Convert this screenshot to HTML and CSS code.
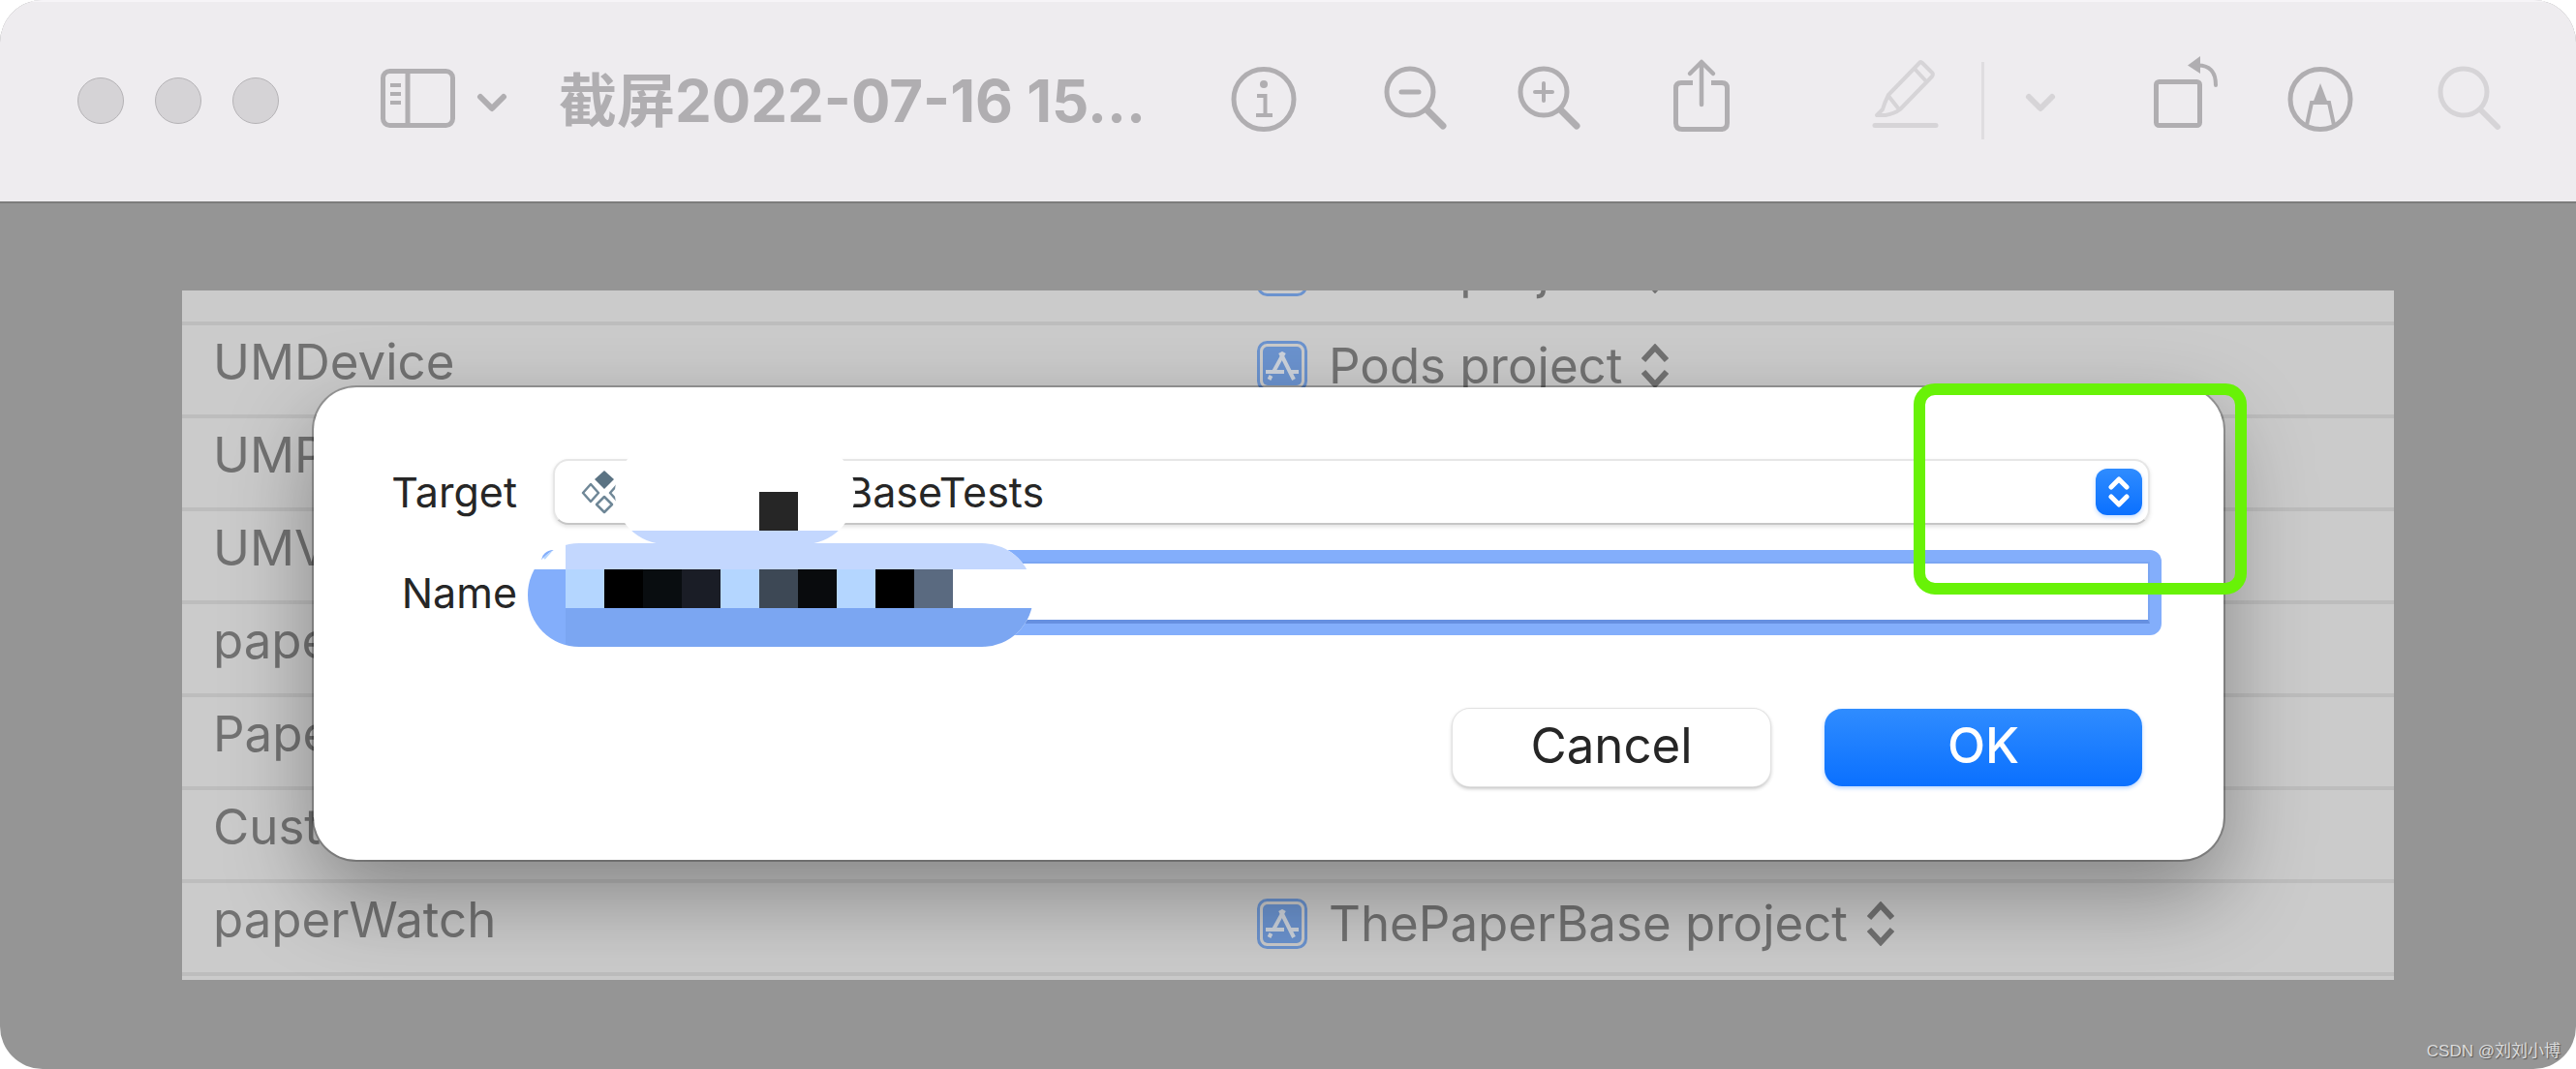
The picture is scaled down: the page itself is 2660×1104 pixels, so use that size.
FILE: index.html
```html
<!DOCTYPE html>
<html lang="zh-CN">
<head>
    <meta charset="UTF-8">
    <meta name="viewport" content="width=device-width, initial-scale=1.0">
    <title>截屏2022-07-16 15...</title>
    <link rel="stylesheet" href="styles.css">
</head>
<body>

    <!-- shared icons -->
    <svg class="sprite" aria-hidden="true">
        <symbol id="app-icon" viewBox="0 0 52 52">
            <rect x="1.5" y="1.5" width="49" height="49" rx="9" fill="none" stroke="currentColor" stroke-width="3"/>
            <rect x="6" y="6" width="40" height="40" rx="5" fill="currentColor"/>
            <g fill="none" stroke="#cdd3dc" stroke-width="4">
                <path d="M28 12 L17 32 M14.500 36 L12.500 40"/>
                <path d="M24 12 L38 40"/>
                <path d="M9 32 H28 M35 32 H43"/>
            </g>
        </symbol>
        <symbol id="updown" viewBox="0 0 28 46">
            <path d="M2 17 L14 4 L26 17 M2 29 L14 42 L26 29" fill="none" stroke="currentColor" stroke-width="6"/>
        </symbol>
        <symbol id="chevron" viewBox="0 0 40 40">
            <path d="M8 16 L20 28 L32 16" fill="none" stroke="currentColor" stroke-width="6" stroke-linecap="round" stroke-linejoin="round"/>
        </symbol>
    </svg>

    <div class="window">
        <header class="toolbar">
            <div class="lights">
                <button class="light" aria-label="Close"></button>
                <button class="light" aria-label="Minimize"></button>
                <button class="light" aria-label="Zoom window"></button>
            </div>

            <button class="tool sidebar" aria-label="Sidebar">
                <svg class="icon" viewBox="0 0 80 80">
                    <rect x="3.500" y="9.500" width="72" height="56" rx="7" stroke-width="5"/>
                    <path d="M29 10 V66" stroke-width="5"/>
                    <path d="M11 24 H22 M11 33 H22 M11 42 H22" stroke-width="4"/>
                </svg>
                <svg class="chevron"><use href="#chevron"/></svg>
            </button>

            <h1 class="title">截屏2022-07-16 15...</h1>

            <div class="tools">
                <button class="tool" aria-label="Info">
                    <svg class="icon" viewBox="0 0 80 80">
                        <circle cx="40" cy="38.500" r="31" stroke-width="5"/>
                        <circle cx="40" cy="23" r="4" class="solid"/>
                        <path d="M33 35 H41.500 V54 M32 55 H49" stroke-width="4"/>
                    </svg>
                </button>
                <div class="zoom">
                    <button class="tool" aria-label="Zoom out">
                        <svg class="icon" viewBox="0 0 80 80">
                            <circle cx="34" cy="31" r="24" stroke-width="5"/>
                            <path d="M25 31 H43" stroke-width="5" stroke-linecap="round"/>
                            <path d="M52 50 L68 66" stroke-width="7" stroke-linecap="round"/>
                        </svg>
                    </button>
                    <button class="tool" aria-label="Zoom in">
                        <svg class="icon" viewBox="0 0 80 80">
                            <circle cx="34" cy="31" r="24" stroke-width="5"/>
                            <path d="M25 31 H43 M34 22 V40" stroke-width="4" stroke-linecap="round"/>
                            <path d="M52 50 L68 66" stroke-width="7" stroke-linecap="round"/>
                        </svg>
                    </button>
                </div>
                <button class="tool" aria-label="Share">
                    <svg class="icon" viewBox="0 0 80 80">
                        <path d="M31 21.500 H19 Q13.500 21.500 13.500 27 V63 Q13.500 69.500 20 69.500 H60 Q66.500 69.500 66.500 63 V27 Q66.500 21.500 61 21.500 H50" stroke-width="5"/>
                        <path d="M40 44 V2 M28 12 L40 0 L52 12" stroke-width="4.500" stroke-linecap="round" stroke-linejoin="round"/>
                    </svg>
                </button>
            </div>

            <div class="tools edit faded">
                <button class="tool" aria-label="Highlight" disabled>
                    <svg class="icon" viewBox="0 0 80 80">
                        <path d="M8 65.500 H71" stroke-width="5" stroke-linecap="round"/>
                        <path d="M54 1 L22 34 Q18 42 16 49 L10 55 H19 Q29 53 34 49 L67 15 Q69 12 66 10 L57 1 Q55 -1 54 1 Z M49 7 L61 20 M22 35 L33 49" stroke-width="4" stroke-linejoin="round"/>
                    </svg>
                </button>
                <span class="separator"></span>
                <button class="tool" aria-label="Highlight options" disabled>
                    <svg class="chevron"><use href="#chevron"/></svg>
                </button>
            </div>

            <div class="tools end">
                <button class="tool" aria-label="Rotate">
                    <svg class="icon" viewBox="0 0 80 80">
                        <rect x="9.500" y="20.500" width="45" height="45" rx="3" stroke-width="5"/>
                        <path d="M52 3.500 Q71 3 71 24" stroke-width="4" stroke-linecap="round"/>
                        <path class="solid" d="M42 3.500 L55 -6 V12 Z"/>
                    </svg>
                </button>
                <button class="tool" aria-label="Markup">
                    <svg class="icon" viewBox="0 0 80 80">
                        <circle cx="40" cy="38.500" r="31" stroke-width="5"/>
                        <path d="M26 65 L31 42 H49 L54 65" stroke-width="4"/>
                        <path class="solid" d="M40 22 L48 43 H32 Z"/>
                    </svg>
                </button>
                <button class="tool search faded" aria-label="Search" disabled>
                    <svg class="icon" viewBox="0 0 80 80">
                        <circle cx="34" cy="31" r="24" stroke-width="5"/>
                        <path d="M52 50 L69 67" stroke-width="6" stroke-linecap="round"/>
                    </svg>
                </button>
            </div>
        </header>

        <main class="content">
            <div class="sheet">
                <table class="targets">
                    <tr>
                        <td></td>
                        <td><button class="project"><svg class="app"><use href="#app-icon"/></svg>Pods project<svg class="updown"><use href="#updown"/></svg></button></td>
                    </tr>
                    <tr>
                        <td>UMDevice</td>
                        <td><button class="project"><svg class="app"><use href="#app-icon"/></svg>Pods project<svg class="updown"><use href="#updown"/></svg></button></td>
                    </tr>
                    <tr><td>UMP</td><td></td></tr>
                    <tr><td>UMV</td><td></td></tr>
                    <tr><td>pape</td><td></td></tr>
                    <tr><td>Pape</td><td></td></tr>
                    <tr><td>Cust</td><td></td></tr>
                    <tr>
                        <td>paperWatch</td>
                        <td><button class="project"><svg class="app"><use href="#app-icon"/></svg>ThePaperBase project<svg class="updown"><use href="#updown"/></svg></button></td>
                    </tr>
                </table>

                <form class="dialog">
                    <div class="row">
                        <label for="target">Target</label>
                        <div class="popup">
                            <select id="target">
                                <option>BaseTests</option>
                            </select>
                            <svg class="kit" viewBox="0 0 40 46">
                                <path d="M24 1 L34 10 L24 20 L14 10 Z" fill="#5b7383"/>
                                <g fill="none" stroke="#6f8797" stroke-width="2.500" stroke-linejoin="round">
                                    <path d="M10 15 L18 24 L10 33 L2 24 Z"/>
                                    <path d="M24 28 L32 36 L24 44 L16 36 Z"/>
                                    <path d="M38 15 L30 24 L38 33"/>
                                </g>
                            </svg>
                            <span class="stepper">
                                <svg viewBox="0 0 48 48"><path d="M16 19 L24 11 L32 19 M16 29 L24 37 L32 29"/></svg>
                            </span>
                        </div>
                    </div>
                    <div class="row">
                        <label for="name">Name</label>
                        <input type="text" id="name" class="name">
                    </div>
                    <div class="actions">
                        <button type="button" class="button">Cancel</button>
                        <button type="button" class="button primary">OK</button>
                    </div>

                    <!-- blurred out project name, 40px mosaic cells -->
                    <svg class="mosaic" viewBox="0 0 540 210" aria-hidden="true">
                        <clipPath id="upper"><rect x="95" y="-4" width="248" height="106" rx="53"/></clipPath>
                        <clipPath id="lower"><rect x="5" y="101" width="522" height="107" rx="53"/></clipPath>
                        <g clip-path="url(#upper)">
                            <rect x="95" y="-4" width="248" height="106" fill="#fff"/>
                            <rect x="95" y="88" width="248" height="18" fill="#c3d7fe"/>
                            <rect x="244" y="48" width="40" height="40" fill="#262626"/>
                        </g>
                        <g clip-path="url(#lower)">
                            <rect x="0" y="101" width="540" height="107" fill="#fff"/>
                            <path d="M22 117 L30 108" stroke="#b4d6ff" stroke-width="2"/>
                            <rect x="44" y="101" width="496" height="27" fill="#c3d7fe"/>
                            <rect x="0" y="128" width="44" height="80" fill="#83aefb"/>
                            <rect x="44" y="128" width="360" height="40" fill="#b4d6ff"/>
                            <rect x="84" y="128" width="40" height="40" fill="#000"/>
                            <rect x="124" y="128" width="40" height="40" fill="#090d10"/>
                            <rect x="164" y="128" width="40" height="40" fill="#1a1d26"/>
                            <rect x="244" y="128" width="40" height="40" fill="#3d4855"/>
                            <rect x="284" y="128" width="40" height="40" fill="#090b0d"/>
                            <rect x="364" y="128" width="40" height="40" fill="#000"/>
                            <rect x="404" y="128" width="40" height="40" fill="#5a6a80"/>
                            <rect x="44" y="168" width="496" height="40" fill="#7ba6f2"/>
                        </g>
                    </svg>
                    <div class="highlight"></div>
                </form>
            </div>

            <div class="watermark">CSDN @刘刘小博</div>
        </main>
    </div>

</body>
</html>
```

FILE: styles.css
```css
* {
    margin: 0;
    padding: 0;
    box-sizing: border-box;
}
body {
    font-family: Inter, 'Noto Sans CJK SC', sans-serif;
    background-color: #fff;
}
button {
    font-family: inherit;
    background: none;
    border: none;
}
.sprite {
    position: absolute;
    width: 0;
    height: 0;
}
.window {
    display: flex;
    flex-direction: column;
    min-height: 100vh;
    border-radius: 44px;
    overflow: hidden;
    background-color: #959595;
}

/* toolbar */
.toolbar {
    display: flex;
    align-items: center;
    height: 210px;
    padding: 0 70px 2px 80px;
    background-color: #eeecef;
    border-top: 2px solid #f6f4f7;
    border-bottom: 2px solid #7c7c7c;
    color: #b0aeb1;
}
.lights {
    display: flex;
    gap: 32px;
}
.light {
    width: 48px;
    height: 48px;
    border-radius: 50%;
    background-color: #d5d3d6;
    border: 1px solid #b5b3b6;
}
.tool {
    display: flex;
    align-items: center;
    color: inherit;
}
.icon {
    display: block;
    width: 80px;
    height: 80px;
    overflow: visible;
    fill: none;
    stroke: currentColor;
}
.icon .solid {
    fill: currentColor;
    stroke: none;
}
.chevron {
    width: 40px;
    height: 40px;
}
.sidebar {
    margin-left: 104px;
    gap: 16px;
}
.title {
    flex: 1;
    margin-left: 49px;
    font-size: 60px;
    font-weight: 700;
    line-height: 88px;
    white-space: nowrap;
}
.tools {
    display: flex;
    align-items: center;
    gap: 77px;
}
.zoom {
    display: flex;
    gap: 58px;
}
.edit {
    margin-left: 131px;
    gap: 38px;
}
.faded {
    color: #d6d4d7;
}
.separator {
    width: 3px;
    height: 80px;
    background-color: #dfdde0;
}
.end {
    margin-left: 90px;
    gap: 59px;
}
.search {
    margin-left: 15px;
}

/* document */
.content {
    position: relative;
    flex: 1;
    padding: 90px 188px;
}
.sheet {
    position: relative;
    height: 712px;
    overflow: hidden;
    background-color: #cbcbcb;
}
.targets {
    width: 100%;
    margin-top: -62px;
    table-layout: fixed;
    border-collapse: collapse;
    font-size: 51px;
    line-height: 64px;
    color: #727272;
}
.targets tr {
    height: 96px;
    border-bottom: 4px solid #bdbdbd;
}
.targets td {
    padding: 6px 0 16px 32px;
    vertical-align: top;
    white-space: nowrap;
}
.targets td:last-child {
    width: 1174px;
    padding: 10px 0 10px;
}
.project {
    display: flex;
    align-items: center;
    font-size: 51px;
    line-height: 64px;
    color: inherit;
}
.app {
    width: 52px;
    height: 52px;
    margin-right: 22px;
    color: #6b93cf;
}
.updown {
    width: 28px;
    height: 46px;
    margin-left: 20px;
}

/* dialog */
.dialog {
    position: absolute;
    top: 100px;
    left: 136px;
    right: 176px;
    padding: 74px 76px 76px 60px;
    background-color: #fff;
    border-radius: 44px;
    box-shadow: 0 0 0 2px rgba(0, 0, 0, 0.25), 0 36px 90px rgba(0, 0, 0, 0.35);
    color: #262626;
}
.row {
    display: flex;
    align-items: center;
    gap: 37px;
    margin-bottom: 38px;
}
.row label {
    width: 150px;
    font-size: 43px;
    line-height: 56px;
    text-align: right;
}
.popup {
    position: relative;
    flex: 1;
    height: 68px;
}
.popup select {
    appearance: none;
    width: 100%;
    height: 68px;
    padding-left: 300px;
    font-family: inherit;
    font-size: 43px;
    color: inherit;
    background-color: #fff;
    border: 2px solid #e6e6e6;
    border-bottom-color: #c6c6c6;
    border-radius: 16px;
    box-shadow: 0 2px 4px rgba(0, 0, 0, 0.12);
}
.kit {
    position: absolute;
    top: 11px;
    left: 29px;
    width: 40px;
    height: 46px;
}
.stepper {
    position: absolute;
    top: 10px;
    right: 8px;
    width: 48px;
    height: 48px;
    border-radius: 12px;
    background: linear-gradient(#2f8cff, #0a70ff);
    box-shadow: 0 2px 4px rgba(10, 112, 255, 0.25);
    pointer-events: none;
}
.stepper svg {
    display: block;
    fill: none;
    stroke: #fff;
    stroke-width: 5;
    stroke-linecap: round;
    stroke-linejoin: round;
}
.name {
    flex: 1;
    height: 64px;
    padding: 0 12px;
    font-family: inherit;
    font-size: 43px;
    border: 2px solid #7ba6f2;
    border-bottom: 4px solid #6690e0;
    box-shadow: 0 0 0 12px #83aefb;
    outline: none;
    clip-path: inset(-12px round 12px);
}
.actions {
    display: flex;
    justify-content: flex-end;
    gap: 56px;
    margin-top: 88px;
    padding-right: 8px;
}
.button {
    width: 328px;
    height: 80px;
    padding-bottom: 4px;
    font-size: 51px;
    line-height: 76px;
    color: #262626;
    background-color: #fff;
    border-radius: 18px;
    box-shadow: 0 0 0 1px #e2e2e2, 0 2px 4px rgba(0, 0, 0, 0.3);
}
.button.primary {
    font-weight: 500;
    color: #fff;
    background: linear-gradient(#2f8cff, #0a70ff);
    box-shadow: 0 2px 4px rgba(10, 112, 255, 0.3);
}
.mosaic {
    position: absolute;
    top: 60px;
    left: 216px;
    width: 540px;
    height: 210px;
}
.highlight {
    position: absolute;
    top: -4px;
    right: -24px;
    width: 344px;
    height: 218px;
    border: 12px solid #68f207;
    border-radius: 22px;
    pointer-events: none;
}
.watermark {
    position: absolute;
    right: 16px;
    bottom: 6px;
    font-family: 'Liberation Sans', 'Noto Sans CJK SC', sans-serif;
    font-size: 17px;
    line-height: 24px;
    color: #dcdcdc;
    text-shadow: 1px 1px 1px #555;
}
```
